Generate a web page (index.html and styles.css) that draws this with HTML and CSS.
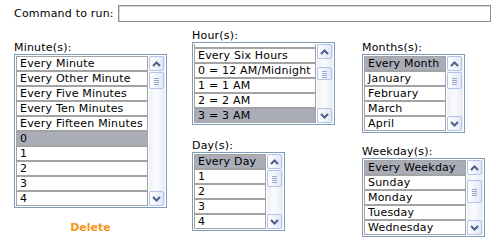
FILE: index.html
```html
<!DOCTYPE html>
<html lang="en">
<head>
    <meta charset="UTF-8">
    <title>Cron Job</title>
    <link rel="stylesheet" href="styles.css">
</head>
<body>
    <div class="command-row">
        <label class="command-label" for="command">Command to run:</label>
        <input type="text" id="command" class="command-input">
    </div>

    <div class="fields">
        <div class="col col-minute">
            <div class="field-label">Minute(s):</div>
            <div class="listbox">
                <ul class="options rows-10">
                    <li>Every Minute</li>
                    <li>Every Other Minute</li>
                    <li>Every Five Minutes</li>
                    <li>Every Ten Minutes</li>
                    <li>Every Fifteen Minutes</li>
                    <li class="selected">0</li>
                    <li>1</li>
                    <li>2</li>
                    <li>3</li>
                    <li>4</li>
                </ul>
                <div class="scrollbar">
                    <div class="sb-btn"><svg width="9" height="6" viewBox="0 0 9 6"><path d="M1 5 L4.5 1.5 L8 5" fill="none" stroke="#4d6185" stroke-width="2"/></svg></div>
                    <div class="sb-thumb"></div>
                    <div class="sb-track"></div>
                    <div class="sb-btn"><svg width="9" height="6" viewBox="0 0 9 6"><path d="M1 1 L4.5 4.5 L8 1" fill="none" stroke="#4d6185" stroke-width="2"/></svg></div>
                </div>
            </div>
            <div class="delete">Delete</div>
        </div>

        <div class="col col-hour">
            <div class="field-label">Hour(s):</div>
            <div class="listbox">
                <ul class="options rows-5 scrolled">
                    <li class="sliver"></li>
                    <li>Every Six Hours</li>
                    <li>0 = 12 AM/Midnight</li>
                    <li>1 = 1 AM</li>
                    <li>2 = 2 AM</li>
                    <li class="selected">3 = 3 AM</li>
                </ul>
                <div class="scrollbar">
                    <div class="sb-btn"><svg width="9" height="6" viewBox="0 0 9 6"><path d="M1 5 L4.5 1.5 L8 5" fill="none" stroke="#4d6185" stroke-width="2"/></svg></div>
                    <div class="sb-thumb thumb-low"></div>
                    <div class="sb-track"></div>
                    <div class="sb-btn"><svg width="9" height="6" viewBox="0 0 9 6"><path d="M1 1 L4.5 4.5 L8 1" fill="none" stroke="#4d6185" stroke-width="2"/></svg></div>
                </div>
            </div>

            <div class="field-label day-label">Day(s):</div>
            <div class="listbox box-day">
                <ul class="options rows-5">
                    <li class="selected">Every Day</li>
                    <li>1</li>
                    <li>2</li>
                    <li>3</li>
                    <li>4</li>
                </ul>
                <div class="scrollbar">
                    <div class="sb-btn"><svg width="9" height="6" viewBox="0 0 9 6"><path d="M1 5 L4.5 1.5 L8 5" fill="none" stroke="#4d6185" stroke-width="2"/></svg></div>
                    <div class="sb-thumb"></div>
                    <div class="sb-track"></div>
                    <div class="sb-btn"><svg width="9" height="6" viewBox="0 0 9 6"><path d="M1 1 L4.5 4.5 L8 1" fill="none" stroke="#4d6185" stroke-width="2"/></svg></div>
                </div>
            </div>
        </div>

        <div class="col col-month">
            <div class="field-label">Months(s):</div>
            <div class="listbox box-month">
                <ul class="options rows-5">
                    <li class="selected">Every Month</li>
                    <li>January</li>
                    <li>February</li>
                    <li>March</li>
                    <li>April</li>
                </ul>
                <div class="scrollbar">
                    <div class="sb-btn"><svg width="9" height="6" viewBox="0 0 9 6"><path d="M1 5 L4.5 1.5 L8 5" fill="none" stroke="#4d6185" stroke-width="2"/></svg></div>
                    <div class="sb-thumb"></div>
                    <div class="sb-track"></div>
                    <div class="sb-btn"><svg width="9" height="6" viewBox="0 0 9 6"><path d="M1 1 L4.5 4.5 L8 1" fill="none" stroke="#4d6185" stroke-width="2"/></svg></div>
                </div>
            </div>

            <div class="field-label weekday-label">Weekday(s):</div>
            <div class="listbox box-weekday">
                <ul class="options rows-5">
                    <li class="selected">Every Weekday</li>
                    <li>Sunday</li>
                    <li>Monday</li>
                    <li>Tuesday</li>
                    <li>Wednesday</li>
                </ul>
                <div class="scrollbar">
                    <div class="sb-btn"><svg width="9" height="6" viewBox="0 0 9 6"><path d="M1 5 L4.5 1.5 L8 5" fill="none" stroke="#4d6185" stroke-width="2"/></svg></div>
                    <div class="sb-thumb thumb-tall"></div>
                    <div class="sb-track"></div>
                    <div class="sb-btn"><svg width="9" height="6" viewBox="0 0 9 6"><path d="M1 1 L4.5 4.5 L8 1" fill="none" stroke="#4d6185" stroke-width="2"/></svg></div>
                </div>
            </div>
        </div>
    </div>
</body>
</html>
```

FILE: styles.css
```css
* {
    margin: 0;
    padding: 0;
    box-sizing: border-box;
}

body {
    font-family: "DejaVu Sans", Verdana, sans-serif;
    font-size: 11px;
    letter-spacing: 0.2px;
    color: #000;
    background-color: #fff;
    padding: 5px 6px 0 14px;
}

.command-row {
    display: flex;
    align-items: center;
    height: 17px;
}

.command-label {
    width: 104px;
}

.command-input {
    width: 373px;
    height: 17px;
    border: 1px solid #8c8c8c;
    box-shadow: inset 1px 1px 0 #d6d6d6;
    background-color: #fff;
}

.fields {
    display: flex;
    align-items: flex-start;
    margin-top: 7px;
}

.col-minute {
    width: 153px;
    margin-top: 12px;
    margin-right: 25px;
}

.col-hour {
    width: 143px;
    margin-right: 27px;
}

.col-month {
    margin-top: 12px;
}

.field-label {
    line-height: 13px;
    height: 13px;
}

.day-label {
    margin-top: 14px;
}

.weekday-label {
    margin-top: 12px;
}

.listbox {
    display: flex;
    border: 1px solid #7f9db9;
    padding: 1px;
    background-color: #fff;
    overflow: hidden;
}

.box-day {
    width: 93px;
}

.box-month {
    width: 103px;
}

.box-weekday {
    width: 123px;
}

.options {
    list-style: none;
    flex: 1;
    min-width: 0;
    overflow: hidden;
}

.rows-10 {
    height: 150px;
}

.rows-5 {
    height: 75px;
}

.options.scrolled {
    height: 79px;
}

.options li {
    border: 1px solid #a3a3a3;
    line-height: 13px;
    padding: 0 3px;
    white-space: nowrap;
    overflow: hidden;
    background-color: #fff;
}

.options li.sliver {
    height: 4px;
    border-top: none;
}

.options li.selected {
    background-color: #aaacb8;
}

.scrollbar {
    width: 16px;
    margin-left: 1px;
    display: flex;
    flex-direction: column;
    background: linear-gradient(to right, #eef0f8, #fbfbfe 45%, #e9ecf6);
}

.sb-btn,
.sb-thumb {
    height: 15px;
    margin-right: 1px;
    border: 1px solid #b2c2e8;
    border-radius: 2px;
    background: linear-gradient(to right, #fdfeff, #e2e8f7);
}

.sb-btn {
    display: flex;
    align-items: center;
    justify-content: center;
}

.sb-thumb {
    height: 17px;
    margin-top: 1px;
    position: relative;
}

.sb-thumb::after {
    content: "";
    position: absolute;
    left: 4px;
    right: 4px;
    top: 50%;
    height: 7px;
    margin-top: -3px;
    background: repeating-linear-gradient(#98a9d0 0 1px, transparent 1px 2px);
}

.thumb-low {
    margin-top: 8px;
    height: 13px;
}

.thumb-tall {
    margin-top: 5px;
    height: 23px;
}

.sb-track {
    flex: 1;
}

.delete {
    margin-top: 13px;
    text-align: center;
    font-weight: bold;
    line-height: 13px;
    letter-spacing: 0;
    color: #f7961e;
}
```
